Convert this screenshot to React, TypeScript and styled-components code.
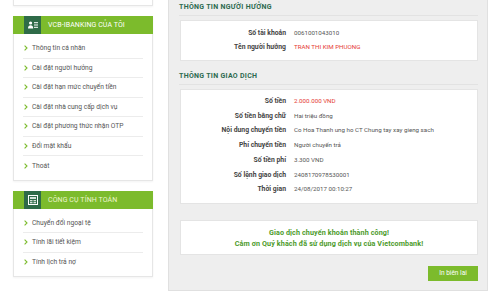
import React, { FunctionComponent } from 'react';
import styled, { createGlobalStyle } from 'styled-components';

const Global = createGlobalStyle`
  html, body {
    margin: 0;
    padding: 0;
    background: #ffffff;
    font-family: Roboto, 'Liberation Sans', Arial, sans-serif;
    color: #555;
  }
`;

interface MenuProps {
  title: string;
  icon: any;
  items: string[];
  pale?: boolean;
}

const UserCardIcon = () => (
  <svg width="10" height="8" viewBox="0 0 10 8">
    <circle cx="2.6" cy="2" r="1.6" fill="#fff" />
    <path d="M0 7.5 C0 4.8 1.2 4.2 2.6 4.2 C4 4.2 5.2 4.8 5.2 7.5 Z" fill="#fff" />
    <rect x="6" y="1.2" width="4" height="1" fill="#fff" />
    <rect x="6" y="3.5" width="4" height="1" fill="#fff" />
    <rect x="6" y="5.8" width="4" height="1" fill="#fff" />
  </svg>
);

const CalcIcon = () => (
  <svg width="10" height="10" viewBox="0 0 10 10">
    <rect x="0.5" y="0.5" width="9" height="9" fill="none" stroke="#fff" strokeWidth="1" />
    <rect x="2" y="2" width="6" height="2" fill="#fff" opacity="0.8" />
    <rect x="2" y="5" width="2.5" height="1.3" fill="#fff" opacity="0.8" />
    <rect x="5.5" y="5" width="2.5" height="1.3" fill="#fff" opacity="0.8" />
    <rect x="2" y="7" width="2.5" height="1.3" fill="#fff" opacity="0.8" />
    <rect x="5.5" y="7" width="2.5" height="1.3" fill="#fff" opacity="0.8" />
  </svg>
);

const Chevron = () => (
  <svg width="4" height="6" viewBox="0 0 4 6">
    <path d="M0.6 0.6 L3 3 L0.6 5.4" fill="none" stroke="#7cbc2d" strokeWidth="1.1" />
  </svg>
);

const MenuCard: FunctionComponent<MenuProps> = props => (
  <Card>
    <CardHead pale={props.pale}>
      <div className="icon">{props.icon}</div>
      <div className="title">{props.title}</div>
    </CardHead>
    <MenuList>
      {props.items.map(item => (
        <MenuItem key={item}>
          <Chevron />
          <span>{item}</span>
        </MenuItem>
      ))}
    </MenuList>
  </Card>
);

const payeeRows = [
  { label: 'Số tài khoản', value: '0061001043010' },
  { label: 'Tên người hưởng', value: 'TRAN THI KIM PHUONG', red: true },
];

const txRows = [
  { label: 'Số tiền', value: '2.000.000 VND', red: true },
  { label: 'Số tiền bằng chữ', value: 'Hai triệu đồng' },
  { label: 'Nội dung chuyển tiền', value: 'Co Hoa Thanh ung ho CT Chung tay xay gieng sach' },
  { label: 'Phí chuyển tiền', value: 'Người chuyển trả' },
  { label: 'Số tiền phí', value: '3.300 VND' },
  { label: 'Số lệnh giao dịch', value: '2408170978530001' },
  { label: 'Thời gian', value: '24/08/2017 00:10:27' },
];

const App = () => (
  <>
    <Global />
    <Page>
      <Sidebar>
        <TopStub />
        <MenuCard
          title="VCB-IBANKING CỦA TÔI"
          icon={<UserCardIcon />}
          items={[
            'Thông tin cá nhân',
            'Cài đặt người hưởng',
            'Cài đặt hạn mức chuyển tiền',
            'Cài đặt nhà cung cấp dịch vụ',
            'Cài đặt phương thức nhận OTP',
            'Đổi mật khẩu',
            'Thoát',
          ]}
        />
        <MenuCard
          pale
          title="CÔNG CỤ TÍNH TOÁN"
          icon={<CalcIcon />}
          items={['Chuyển đổi ngoại tệ', 'Tính lãi tiết kiệm', 'Tính lịch trả nợ']}
        />
      </Sidebar>
      <Panel>
        <SectionTitle>THÔNG TIN NGƯỜI HƯỞNG</SectionTitle>
        <InfoBox pad={5}>
          {payeeRows.map(r => (
            <Row key={r.label} h={14}>
              <div className="label">{r.label}</div>
              <Value red={r.red}>{r.value}</Value>
            </Row>
          ))}
        </InfoBox>
        <SectionTitle second>THÔNG TIN GIAO DỊCH</SectionTitle>
        <InfoBox pad={4}>
          {txRows.map(r => (
            <Row key={r.label} h={14.7}>
              <div className="label">{r.label}</div>
              <Value red={r.red}>{r.value}</Value>
            </Row>
          ))}
        </InfoBox>
        <Message>
          <div>Giao dịch chuyển khoản thành công!</div>
          <div>Cảm ơn Quý khách đã sử dụng dịch vụ của Vietcombank!</div>
        </Message>
        <Actions>
          <PrintButton>In biên lai</PrintButton>
        </Actions>
      </Panel>
    </Page>
  </>
);

const Page = styled.div`
  display: flex;
  align-items: flex-start;
  width: 500px;
  height: 304px;
  overflow: hidden;
  box-sizing: border-box;
  padding-left: 13px;
`;

const Sidebar = styled.div`
  width: 140px;
  display: flex;
  flex-direction: column;
  gap: 10px;
  margin-top: -5px;
`;

const TopStub = styled.div`
  height: 10px;
  background: #fff;
  border: 1px solid #e6e6e6;
  border-top: none;
  box-shadow: 0 1px 2px rgba(0, 0, 0, 0.05);
`;

const Card = styled.div`
  background: #fff;
  border: 1px solid #e6e6e6;
  border-top: none;
  box-shadow: 0 1px 2px rgba(0, 0, 0, 0.05);
`;

const CardHead = styled.div<{ pale?: boolean }>`
  display: flex;
  align-items: stretch;
  height: 18px;
  margin: 0 -1px;
  background: #7cbb2c;
  .icon {
    width: 17px;
    margin-left: 11px;
    background: #2e6b48;
    display: flex;
    align-items: center;
    justify-content: center;
  }
  .title {
    margin-left: 7px;
    align-self: center;
    font-size: 7px;
    letter-spacing: 0.1px;
    color: ${p => (p.pale ? '#eef6cf' : '#ffffff')};
  }
`;

const MenuList = styled.div`
  padding: 5px 9px 4px 9px;
`;

const MenuItem = styled.div`
  display: flex;
  align-items: center;
  gap: 4px;
  height: 19.5px;
  box-sizing: border-box;
  padding-left: 1px;
  border-bottom: 1px solid #ececec;
  font-size: 6.7px;
  color: #555;
  &:last-child {
    border-bottom: none;
  }
`;

const Panel = styled.div`
  margin-left: 15px;
  margin-top: -1px;
  width: 320px;
  box-sizing: border-box;
  background: #eeeeee;
  border: 1px solid #e0e0e0;
  padding: 0 9px 9px 10px;
`;

const SectionTitle = styled.div<{ second?: boolean }>`
  margin-top: ${p => (p.second ? '9px' : '1px')};
  line-height: 12px;
  padding-bottom: 2px;
  border-bottom: 1px solid #e2e2e2;
  font-size: 7px;
  font-weight: bold;
  color: #2d6a4f;
  letter-spacing: 0.3px;
`;

const InfoBox = styled.div<{ pad: number }>`
  margin-top: 4px;
  margin-left: 1px;
  background: #fff;
  border: 1px solid #e4e4e4;
  padding: ${p => p.pad}px 0 6px 0;
`;

const Row = styled.div<{ h: number }>`
  display: grid;
  grid-template-columns: 105px 1fr;
  column-gap: 8px;
  line-height: ${p => p.h}px;
  font-size: 6.2px;
  .label {
    text-align: right;
    font-weight: bold;
    font-size: 6.8px;
    color: #444;
  }
`;

const Value = styled.div<{ red?: boolean }>`
  color: ${p => (p.red ? '#e53935' : '#555')};
`;

const Message = styled.div`
  margin-top: 16px;
  margin-left: 1px;
  background: #fff;
  border: 1px solid #e4e4e4;
  padding: 6px 0 5px;
  text-align: center;
  font-size: 7.2px;
  font-weight: bold;
  line-height: 11px;
  color: #4c9a2a;
  letter-spacing: 0.1px;
`;

const Actions = styled.div`
  display: flex;
  justify-content: flex-end;
  margin-top: 11px;
`;

const PrintButton = styled.div`
  width: 50px;
  height: 15px;
  background: #7cbb2c;
  color: #fff;
  font-size: 6.5px;
  display: flex;
  align-items: center;
  justify-content: center;
`;

export default App;
